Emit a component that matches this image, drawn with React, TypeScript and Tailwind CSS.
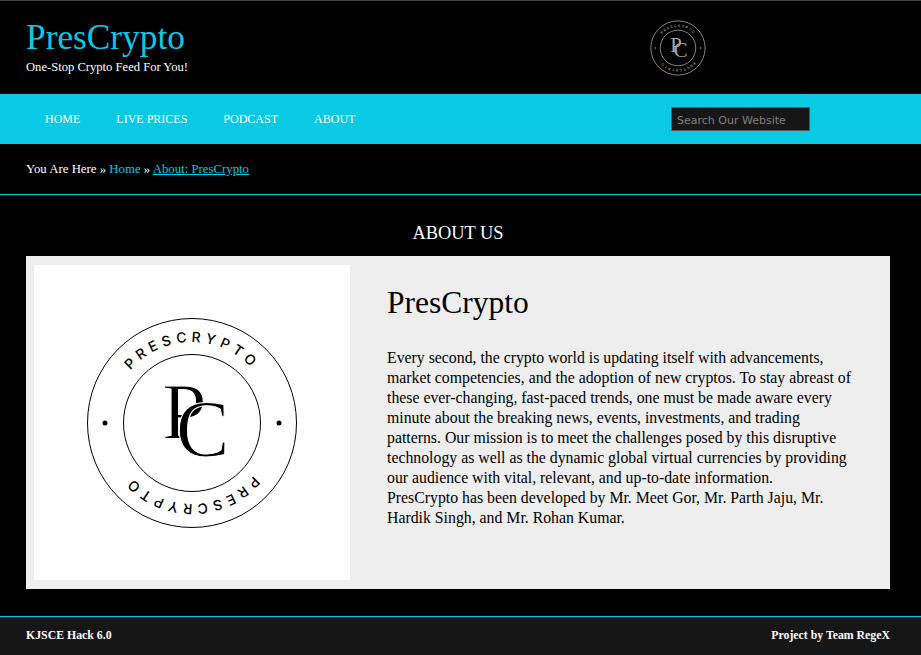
const serif = "font-['Liberation_Serif',serif]";

function Logo({ size, dark }: { size: number; dark?: boolean }) {
  const ink = dark ? "#000000" : "#a8a8a8";
  const arcId = dark ? "arcDark" : "arcLight";
  const thin = dark ? "#ffffff" : "none";
  return (
    <svg width={size} height={size} viewBox="0 0 316 316" className="block">
      <defs>
        <path id={arcId} d="M 77 158 A 81 81 0 0 1 239 158" />
      </defs>
      <circle cx="158" cy="158" r="104.5" fill="none" stroke={ink} strokeWidth={dark ? 1 : 3} />
      <circle cx="158" cy="158" r="68.5" fill="none" stroke={ink} strokeWidth={dark ? 1 : 3} />
      <circle cx="71" cy="158" r="2.5" fill={ink} />
      <circle cx="245" cy="158" r="2.5" fill={ink} />
      <text fontFamily="Inter, sans-serif" fontSize="14" fontWeight="500" letterSpacing="4.7" fill={ink} textAnchor="middle">
        <textPath href={`#${arcId}`} startOffset="50%">PRESCRYPTO</textPath>
      </text>
      <g transform="rotate(180 158 158)">
        <text fontFamily="Inter, sans-serif" fontSize="14" fontWeight="500" letterSpacing="4.7" fill={ink} textAnchor="middle">
          <textPath href={`#${arcId}`} startOffset="50%">PRESCRYPTO</textPath>
        </text>
      </g>
      <text x="128" y="174" fontFamily="'Liberation Serif', serif" fontSize="80" fill={ink} stroke={thin} strokeWidth="1">P</text>
      <text x="142" y="191" fontFamily="'Liberation Serif', serif" fontSize="80" fill={ink} stroke={thin} strokeWidth="1">C</text>
    </svg>
  );
}

export default function App() {
  return (
    <div className={`min-h-[655px] bg-black flex flex-col text-white ${serif}`}>
      <header className="h-[94px] border-t border-[#444444] flex">
        <div className="w-[637px] pl-[26px] pt-[18px]">
          <h1 className="text-[35.3px] leading-[38px] text-[#0ac9e3]">PresCrypto</h1>
          <p className="text-[12.6px] leading-[16px] mt-[2px]">One-Stop Crypto Feed For You!</p>
        </div>
        <div className="pt-[6px]">
          <Logo size={82} />
        </div>
      </header>

      <nav className="h-[50px] bg-[#0ac9e3] flex items-center pl-[45px]">
        <div className="flex gap-[36px] w-[626px] text-[12px]">
          <a>HOME</a>
          <a>LIVE PRICES</a>
          <a>PODCAST</a>
          <a>ABOUT</a>
        </div>
        <input
          placeholder="Search Our Website"
          className="w-[139px] h-[24px] bg-[#161616] border border-[#555555] px-[5px] pt-[2px] text-[11px] font-['DejaVu_Sans',sans-serif] placeholder:text-[#808080]"
        />
      </nav>

      <div className="h-[51px] border-b border-[#0ac9e3] flex items-center pl-[26px] pt-[1px] text-[12.8px]">
        <span>
          You Are Here » <a className="text-[#00c8f0]">Home</a> » <a className="text-[#00c8f0] underline">About: PresCrypto</a>
        </span>
      </div>

      <main className="flex-1 pl-[26px] pr-[31px]">
        <h2 className="text-center text-[18.4px] leading-[24px] mt-[26px] mb-[11px]">ABOUT US</h2>
        <section className="bg-[#eeeeee] h-[333px] flex pl-[8px] pt-[9px] text-black">
          <div className="w-[316px] h-[315px] bg-white">
            <Logo size={316} dark />
          </div>
          <div className="w-[470px] ml-[37px]">
            <h3 className="text-[31.5px] leading-[34px] mt-[21px] mb-[28px]">PresCrypto</h3>
            <p className="text-[15.8px] leading-[20px]">
              Every second, the crypto world is updating itself with advancements, market competencies, and the adoption of new cryptos. To stay abreast of these ever-changing, fast-paced trends, one must be made aware every minute about the breaking news, events, investments, and trading patterns. Our mission is to meet the challenges posed by this disruptive technology as well as the dynamic global virtual currencies by providing our audience with vital, relevant, and up-to-date information.
              <br />
              PresCrypto has been developed by Mr. Meet Gor, Mr. Parth Jaju, Mr. Hardik Singh, and Mr. Rohan Kumar.
            </p>
          </div>
        </section>
      </main>

      <footer className="h-[39px] bg-[#161616] border-t border-[#0ac9e3] flex items-center justify-between pl-[26px] pr-[31px] text-[11.8px] font-bold">
        <span>KJSCE Hack 6.0</span>
        <span>Project by Team RegeX</span>
      </footer>
    </div>
  );
}
